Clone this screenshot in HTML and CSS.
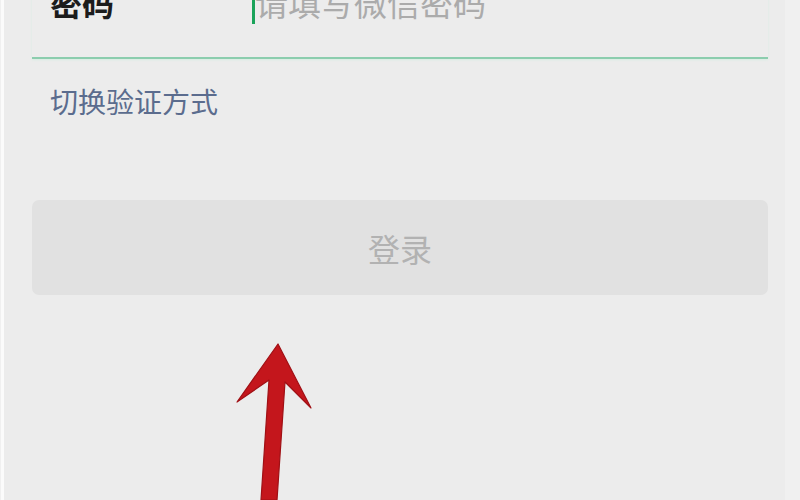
FILE: index.html
```html
<!DOCTYPE html>
<html lang="zh-CN">
<head>
<meta charset="utf-8">
<title>登录</title>
<link rel="stylesheet" href="styles.css">
</head>
<body>
<div class="page">
  <div class="form">
    <div class="row">
      <span class="label">密码</span>
      <span class="cursor"></span>
      <span class="placeholder">请填写微信密码</span>
    </div>
    <div class="switch">切换验证方式</div>
    <div class="btn">登录</div>
  </div>
</div>
<svg class="arrow" width="800" height="500" viewBox="0 0 800 500">
  <polygon points="278,344 311,408 285,382 277,500 261,500 269,380 237,402" fill="#c4161c" stroke="#a01015" stroke-width="1.2" stroke-linejoin="round"/>
</svg>
</body>
</html>
```
FILE: styles.css
```css
html, body {
  margin: 0;
  padding: 0;
}
body {
  width: 800px;
  height: 500px;
  overflow: hidden;
  background: #f0f0f0;
  font-family: "Noto Sans CJK SC", "Noto Sans", sans-serif;
  position: relative;
}
.page {
  width: 781px;
  height: 500px;
  margin-left: 1px;
  border-left: 3px solid #fbfbfb;
  background: #ececec;
  overflow: hidden;
}
.form {
  width: 736px;
  margin-left: 28px;
}
.row {
  display: flex;
  align-items: center;
  margin-top: -14px;
  height: 32px;
  padding-bottom: 39px;
  border-bottom: 2px solid #8ccdae;
  box-shadow: 0 1px 2px #d7ede2;
}
.label {
  width: 202px;
  padding-left: 18px;
  font-size: 32px;
  line-height: 32px;
  font-weight: 700;
  color: #1c1c1c;
}
.cursor {
  width: 3px;
  height: 38px;
  margin-top: 6px;
  background: #1aa35a;
}
.placeholder {
  font-size: 33px;
  line-height: 32px;
  color: #ababab;
  margin-left: 0;
}
.switch {
  margin-top: 28px;
  padding-left: 18px;
  font-size: 28px;
  line-height: 28px;
  color: #5b6c8e;
}
.btn {
  margin-top: 85px;
  height: 95px;
  border-radius: 7px;
  background: #e1e1e1;
  color: #b2b2b2;
  font-size: 32px;
  display: flex;
  align-items: center;
  justify-content: center;
}
.arrow {
  position: absolute;
  left: 0;
  top: 0;
}
```
